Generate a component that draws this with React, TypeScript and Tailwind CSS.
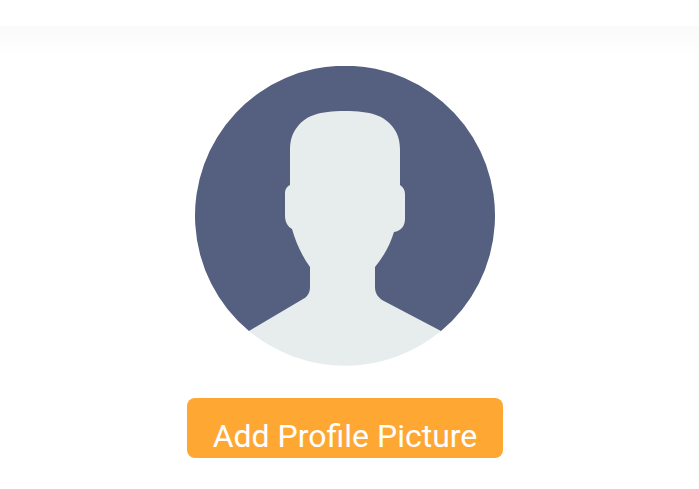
export default function App() {
  return (
    <div className="h-[489px] w-[699px] overflow-hidden bg-white font-['Roboto',sans-serif]">
      <div className="h-[26px] bg-white" />
      <div className="h-[30px] bg-gradient-to-b from-[#fafafa] to-white" />
      <div className="mt-[10px] flex flex-col items-center pr-[9px]">
        <svg width="300" height="300" viewBox="0 0 300 300" className="block">
          <path fill="#556080" d="M54 265 A150 150 0 1 1 246 265 Z" />
          <path
            fill="#E7ECED"
            d="M150 45 C124 45 111 50 103 60 C97 67 95 75 95 84 L95 119 C91 121 90 124 90 128 L90 150 C90 156 93 161 97 163 C101 177 107 190 115 201 L115 221 C115 227 112 231 108 233 L54 265 A150 150 0 0 0 246 265 L187 234 C183 231 180 227 180 221 L180 201 C189 190 195 179 199 166 C206 165 210 160 210 153 L210 128 C210 124 208 121 205 119 L205 84 C205 75 203 67 197 60 C189 50 176 45 150 45 Z"
          />
        </svg>
        <button className="mt-8 flex h-[60px] w-[316px] items-end justify-center rounded-lg bg-[#ffa733] pb-[3px] text-[32px] leading-[37px] text-white">
          Add Profile Picture
        </button>
      </div>
    </div>
  );
}
